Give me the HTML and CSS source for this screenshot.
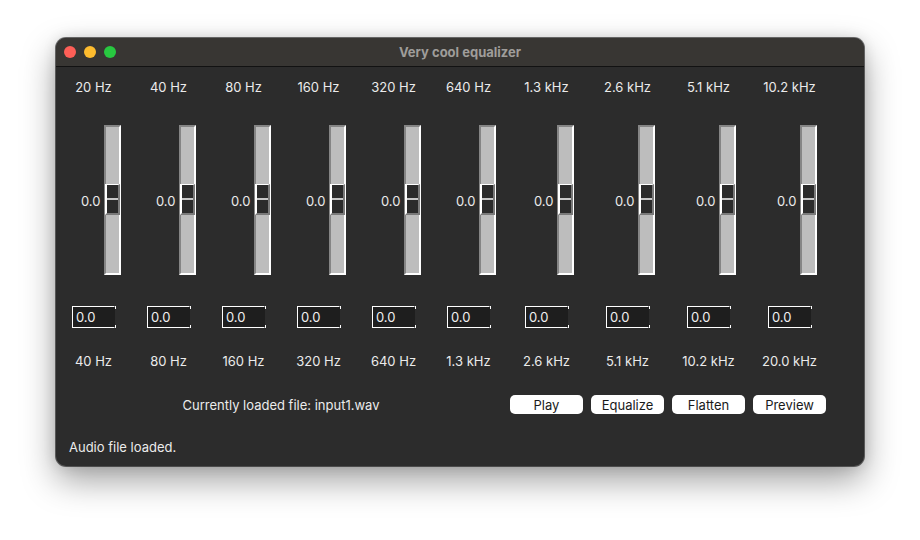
FILE: index.html
```html
<!DOCTYPE html>
<html>
<head>
<meta charset="utf-8">
<link rel="stylesheet" href="styles.css">
</head>
<body>
<div class="window">
  <div class="titlebar">
    <div class="lights">
      <span class="light red"></span>
      <span class="light yellow"></span>
      <span class="light green"></span>
    </div>
    <div class="title">Very cool equalizer</div>
  </div>
  <div class="content">
    <div class="grid">
      <div class="lbl">20 Hz</div>
      <div class="lbl">40 Hz</div>
      <div class="lbl">80 Hz</div>
      <div class="lbl">160 Hz</div>
      <div class="lbl">320 Hz</div>
      <div class="lbl">640 Hz</div>
      <div class="lbl">1.3 kHz</div>
      <div class="lbl">2.6 kHz</div>
      <div class="lbl">5.1 kHz</div>
      <div class="lbl">10.2 kHz</div>

      <div class="slider"><span class="val">0.0</span><div class="track"><div class="thumb"></div></div></div>
      <div class="slider"><span class="val">0.0</span><div class="track"><div class="thumb"></div></div></div>
      <div class="slider"><span class="val">0.0</span><div class="track"><div class="thumb"></div></div></div>
      <div class="slider"><span class="val">0.0</span><div class="track"><div class="thumb"></div></div></div>
      <div class="slider"><span class="val">0.0</span><div class="track"><div class="thumb"></div></div></div>
      <div class="slider"><span class="val">0.0</span><div class="track"><div class="thumb"></div></div></div>
      <div class="slider"><span class="val">0.0</span><div class="track"><div class="thumb"></div></div></div>
      <div class="slider"><span class="val">0.0</span><div class="track"><div class="thumb"></div></div></div>
      <div class="slider"><span class="val">0.0</span><div class="track"><div class="thumb"></div></div></div>
      <div class="slider"><span class="val">0.0</span><div class="track"><div class="thumb"></div></div></div>

      <div class="entry">0.0</div>
      <div class="entry">0.0</div>
      <div class="entry">0.0</div>
      <div class="entry">0.0</div>
      <div class="entry">0.0</div>
      <div class="entry">0.0</div>
      <div class="entry">0.0</div>
      <div class="entry">0.0</div>
      <div class="entry">0.0</div>
      <div class="entry">0.0</div>

      <div class="lbl">40 Hz</div>
      <div class="lbl">80 Hz</div>
      <div class="lbl">160 Hz</div>
      <div class="lbl">320 Hz</div>
      <div class="lbl">640 Hz</div>
      <div class="lbl">1.3 kHz</div>
      <div class="lbl">2.6 kHz</div>
      <div class="lbl">5.1 kHz</div>
      <div class="lbl">10.2 kHz</div>
      <div class="lbl">20.0 kHz</div>

      <div class="file">Currently loaded file: input1.wav</div>
      <div class="btn">Play</div>
      <div class="btn">Equalize</div>
      <div class="btn">Flatten</div>
      <div class="btn">Preview</div>

      <div class="status">Audio file loaded.</div>
    </div>
  </div>
</div>
</body>
</html>
```

FILE: styles.css
```css
html, body {
  margin: 0;
  padding: 0;
  background: #ffffff;
}
body {
  width: 920px;
  height: 540px;
  overflow: hidden;
  padding-top: 38px;
  padding-left: 56px;
  box-sizing: border-box;
  font-family: "Inter", "Liberation Sans", sans-serif;
}
.window {
  width: 808px;
  height: 428px;
  border-radius: 10px;
  overflow: hidden;
  background: #2c2c2c;
  box-shadow: 0 0 0 1px rgba(0,0,0,0.55), 0 14px 34px rgba(0,0,0,0.38), 0 0 14px rgba(0,0,0,0.12);
  display: flex;
  flex-direction: column;
}
.titlebar {
  height: 28px;
  background: #383633;
  border-bottom: 1px solid #121212;
  display: flex;
  align-items: center;
  position: relative;
  flex: none;
}
.lights {
  display: flex;
  gap: 8px;
  padding-left: 8px;
}
.light {
  width: 12px;
  height: 12px;
  border-radius: 50%;
  display: block;
}
.red { background: #fe5f57; }
.yellow { background: #febc2e; }
.green { background: #28c840; }
.title {
  position: absolute;
  left: 0;
  right: 0;
  top: 0;
  bottom: 0;
  display: flex;
  align-items: center;
  justify-content: center;
  color: #9f9d9a;
  font-size: 13px;
  font-weight: 700;
  pointer-events: none;
}
.content {
  flex: 1;
}
.grid {
  display: grid;
  grid-template-columns: repeat(6, 75px) repeat(4, 81px);
  grid-template-rows: 40px 185px 49px 40px 47px 38px;
  justify-items: center;
  align-items: center;
  color: #ebebeb;
  font-size: 13px;
}
.lbl {
  white-space: nowrap;
}
.slider {
  width: 54px;
  display: flex;
  justify-content: flex-end;
  align-items: center;
  gap: 3px;
}
.val {
  font-size: 13px;
  margin-top: 2px;
}
.track {
  width: 17px;
  height: 150px;
  box-sizing: border-box;
  background: #bdbdbd;
  border-left: 2px solid #858585;
  border-top: 2px solid #858585;
  border-right: 2px solid #ffffff;
  border-bottom: 2px solid #ffffff;
  display: flex;
  align-items: center;
  justify-content: center;
}
.thumb {
  width: 15px;
  height: 31px;
  margin: 0 -1px;
  flex: none;
  box-sizing: border-box;
  background: #2b2b2b;
  border-left: 2px solid #ffffff;
  border-top: 1px solid #ffffff;
  border-right: 2px solid #7a7a7a;
  border-bottom: 2px solid #7a7a7a;
  display: flex;
  align-items: center;
}
.thumb::before {
  content: "";
  display: block;
  width: 100%;
  height: 2px;
  background: #c8c8c8;
}
.entry {
  width: 43px;
  height: 22px;
  box-sizing: border-box;
  border: 1px solid #ffffff;
  border-right-color: transparent;
  background: #1e1e1e;
  color: #f0f0f0;
  padding-left: 3px;
  line-height: 20px;
  font-size: 13px;
  position: relative;
}
.entry::before,
.entry::after {
  content: "";
  position: absolute;
  right: -2px;
  width: 1px;
  height: 3px;
  background: #ffffff;
}
.entry::before { top: -1px; }
.entry::after { bottom: -1px; }
.file {
  grid-column: 1 / span 6;
  white-space: nowrap;
}
.btn {
  width: 73px;
  height: 19px;
  border-radius: 5px;
  background: #ffffff;
  color: #1a1a1a;
  font-size: 13px;
  display: flex;
  align-items: center;
  justify-content: center;
}
.status {
  grid-column: 1 / -1;
  justify-self: start;
  padding-left: 13px;
}
```
